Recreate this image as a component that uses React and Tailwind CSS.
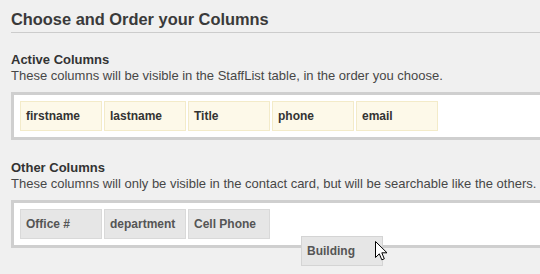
import React from 'react';

const active = ['firstname', 'lastname', 'Title', 'phone', 'email'];
const other = ['Office #', 'department', 'Cell Phone'];

function Chip({ label, variant }) {
  const styles =
    variant === 'active'
      ? 'bg-[#fdf9e9] border-[#f3ebc9] text-[#333]'
      : 'bg-[#e6e6e6] border-[#d9d9d9] text-[#555]';
  return (
    <div className={`w-[82px] h-[30px] border ${styles} px-[5px] flex items-center text-[12px] font-bold shrink-0`}>
      {label}
    </div>
  );
}

function Section({ title, desc, items, variant, children }) {
  return (
    <div className="relative">
      <div className="text-[13px] font-bold leading-[16px] text-[#333]">{title}</div>
      <div className="text-[13px] leading-[16px] text-[#474747] whitespace-nowrap">{desc}</div>
      <div className="mt-[8px] border-[3px] border-r-0 border-[#cfcfcf] bg-white h-[48px] px-[6px] flex items-center gap-[2px]">
        {items.map((it) => (
          <Chip key={it} label={it} variant={variant} />
        ))}
      </div>
      {children}
    </div>
  );
}

export default function App() {
  return (
    <div className="w-[540px] h-[274px] overflow-hidden bg-[#f0f0f0] pl-[11px] pt-[9px] font-['Liberation_Sans',Arial,sans-serif]">
      <div className="text-[16.4px] font-bold leading-[20px] text-[#3a3a3a] pb-[3px] border-b border-[#cccccc]">
        Choose and Order your Columns
      </div>
      <div className="mt-[19px]">
        <Section
          title="Active Columns"
          desc="These columns will be visible in the StaffList table, in the order you choose."
          items={active}
          variant="active"
        />
      </div>
      <div className="mt-[20px]">
        <Section
          title="Other Columns"
          desc="These columns will only be visible in the contact card, but will be searchable like the others."
          items={other}
          variant="other"
        >
          <div className="absolute left-[290px] top-[76px] w-[82px] h-[30px] border border-[#d4d4d4] bg-[#e6e6e6] text-[#555] px-[5px] flex items-center text-[12px] font-bold">
            Building
          </div>
          <svg className="absolute left-[364px] top-[81px]" width="13" height="21" viewBox="0 0 13 21">
            <path
              d="M0.5 0.5 L0.5 16.5 L4.3 12.8 L6.8 18.8 L9.3 17.8 L6.8 11.8 L12 11.8 Z"
              fill="#fff"
              stroke="#000"
              strokeWidth="1"
              strokeLinejoin="miter"
            />
          </svg>
        </Section>
      </div>
    </div>
  );
}
